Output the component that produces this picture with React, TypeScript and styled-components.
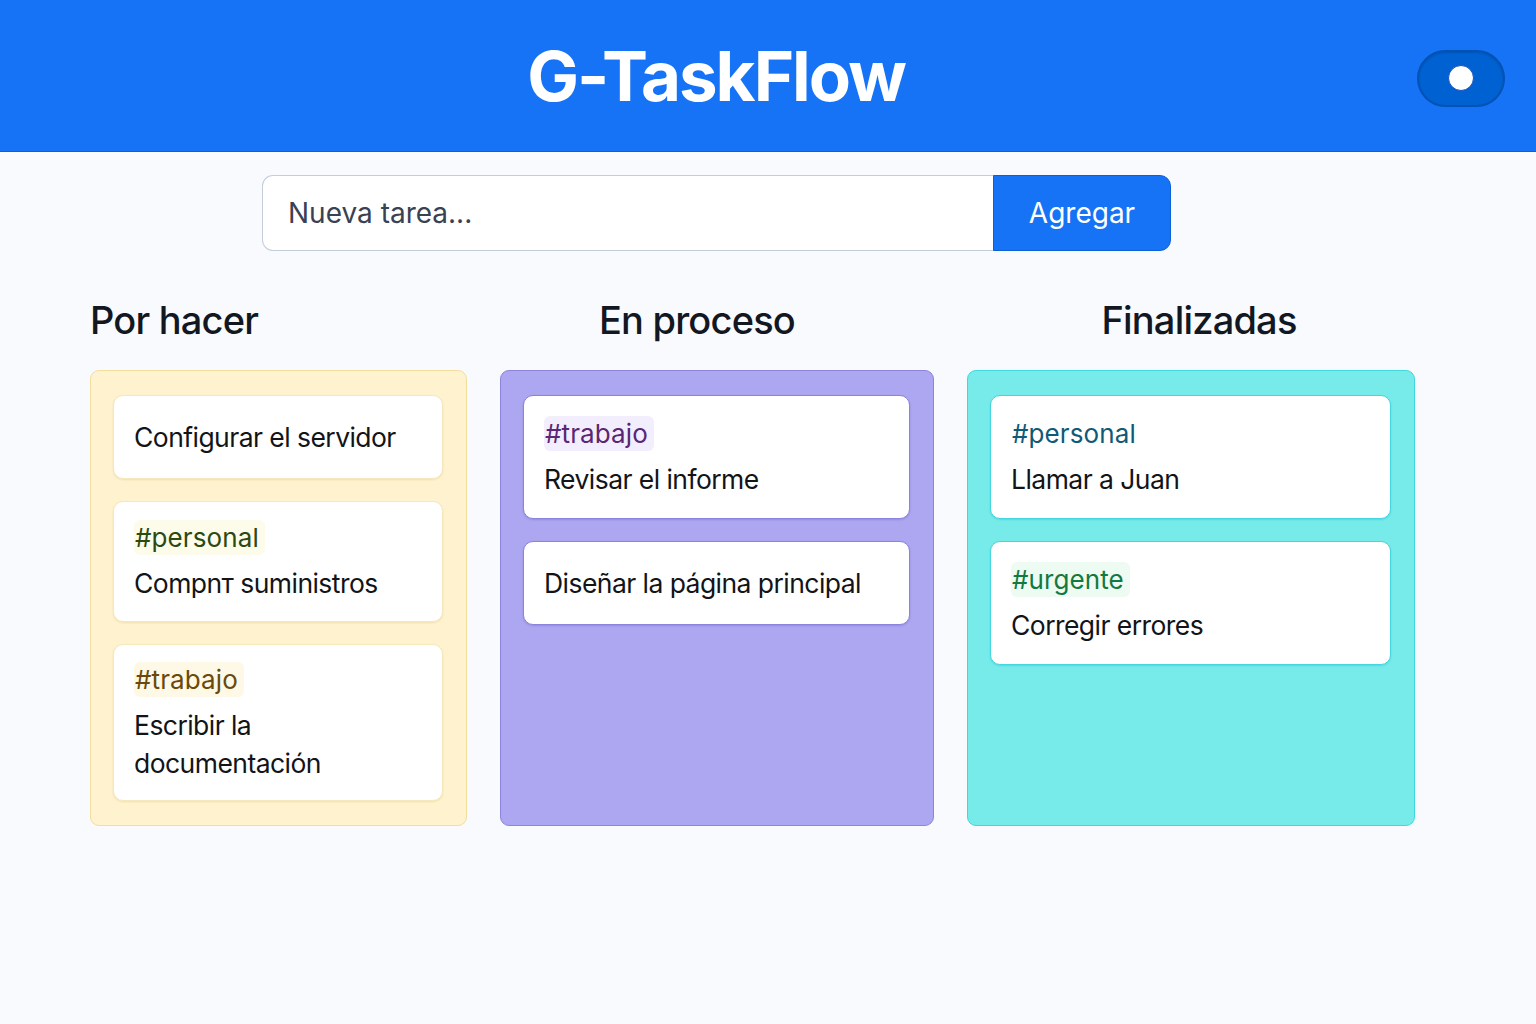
import React from "react";
import styled, { createGlobalStyle } from "styled-components";

const Global = createGlobalStyle`
  * { box-sizing: border-box; }
  html, body { margin: 0; padding: 0; }
  body {
    background: #f8fafd;
    font-family: Inter, "Noto Sans", "Liberation Sans", sans-serif;
    color: #111418;
  }
`;

const Page = styled.div`
  min-height: 1024px;
  background: #f8fafd;
`;

const Header = styled.header`
  height: 152px;
  background: #1673f5;
  border-bottom: 1px solid #0b5fd8;
  display: flex;
  align-items: center;
  padding: 0 31px 0 15px;
`;

const Title = styled.h1`
  flex: 1;
  margin: 0;
  text-align: center;
  color: #ffffff;
  font-size: 69px;
  font-weight: 700;
  letter-spacing: -2px;
  line-height: 1;
  padding-top: 2px;
`;

const Toggle = styled.div`
  width: 88px;
  height: 57px;
  margin-top: 5px;
  border-radius: 29px;
  background: #0062d2;
  border: 2px solid #0152b4;
  display: flex;
  align-items: center;
  justify-content: center;
  box-shadow: inset 0 1px 2px rgba(0, 0, 0, 0.15);
`;

const Knob = styled.span`
  width: 26px;
  height: 26px;
  border-radius: 50%;
  background: #ffffff;
  border: 1px solid #1a4fbf;
`;

const Form = styled.form`
  width: 909px;
  height: 76px;
  margin: 23px 0 0 262px;
  display: flex;
`;

const Input = styled.input`
  flex: 1;
  height: 100%;
  border: 1px solid #c5cddb;
  border-right: none;
  border-radius: 11px 0 0 11px;
  background: #ffffff;
  padding: 0 25px;
  font-family: Inter, "Noto Sans", sans-serif;
  font-size: 28px;
  color: #1f2430;
  outline: none;
  &::placeholder {
    color: #3a4152;
  }
`;

const AddButton = styled.button`
  width: 178px;
  height: 100%;
  border: 1px solid #0d5fd8;
  border-radius: 0 11px 11px 0;
  background: #1673f5;
  color: #ffffff;
  font-family: Inter, "Noto Sans", sans-serif;
  font-size: 28px;
  font-weight: 400;
  padding: 0;
`;

const Board = styled.main`
  display: grid;
  grid-template-columns: 377px 434px 448px;
  grid-template-rows: auto 456px;
  column-gap: 33px;
  row-gap: 27px;
  margin: 46px 0 0 90px;
`;

const Heading = styled.h2<{ $align: string; $pl: number; $pr: number }>`
  margin: 0;
  font-size: 38px;
  font-weight: 500;
  line-height: 46px;
  color: #121722;
  letter-spacing: -0.8px;
  text-align: ${(p) => p.$align};
  padding-left: ${(p) => p.$pl}px;
  padding-right: ${(p) => p.$pr}px;
`;

type Tone = { bg: string; border: string; card: string; shadow: string };

const Column = styled.section<{ $tone: Tone }>`
  background: ${(p) => p.$tone.bg};
  border: 1px solid ${(p) => p.$tone.border};
  border-radius: 9px;
  padding: 24px 23px 24px 22px;
  display: flex;
  flex-direction: column;
  gap: 22px;
`;

const Card = styled.article<{ $tone: Tone }>`
  background: #ffffff;
  border: 1px solid ${(p) => p.$tone.card};
  border-radius: 10px;
  box-shadow: 0 1px 2px ${(p) => p.$tone.shadow};
  min-height: 84px;
  padding: 20px 20px 20px;
  display: flex;
  flex-direction: column;
  justify-content: center;
  align-items: flex-start;
`;

const Tag = styled.span<{ $color: string; $bg: string }>`
  display: inline-block;
  font-size: 26px;
  line-height: 31px;
  padding: 2px 6px 2px 1px;
  margin-bottom: 9px;
  border-radius: 6px;
  color: ${(p) => p.$color};
  background: ${(p) => p.$bg};
  letter-spacing: 0.1px;
`;

const CardText = styled.p`
  margin: 0;
  font-size: 26.5px;
  line-height: 38px;
  letter-spacing: -0.55px;
  color: #121418;
  font-weight: 400;
`;

const tones: Record<string, Tone> = {
  todo: { bg: "#fff2cf", border: "#f2dd9f", card: "#f6e8bd", shadow: "rgba(200,170,80,0.25)" },
  doing: { bg: "#ada6f0", border: "#8d85dc", card: "#8b83de", shadow: "rgba(80,70,180,0.25)" },
  done: { bg: "#76ebea", border: "#3fd8e0", card: "#45d6df", shadow: "rgba(20,150,170,0.25)" },
};

type Task = { text: string; tag?: { label: string; color: string; bg: string } };

const columns: {
  title: string;
  align: string;
  pl: number;
  pr: number;
  tone: Tone;
  tasks: Task[];
}[] = [
  {
    title: "Por hacer",
    align: "left",
    pl: 0,
    pr: 0,
    tone: tones.todo,
    tasks: [
      { text: "Configurar el servidor" },
      { text: "Compnт suministros", tag: { label: "#personal", color: "#2c4a10", bg: "#fdfbea" } },
      { text: "Escribir la documentación", tag: { label: "#trabajo", color: "#6a4a0a", bg: "#fef8e6" } },
    ],
  },
  {
    title: "En proceso",
    align: "center",
    pl: 0,
    pr: 40,
    tone: tones.doing,
    tasks: [
      { text: "Revisar el informe", tag: { label: "#trabajo", color: "#5a2675", bg: "#f3eefd" } },
      { text: "Diseñar la página principal" },
    ],
  },
  {
    title: "Finalizadas",
    align: "center",
    pl: 16,
    pr: 0,
    tone: tones.done,
    tasks: [
      { text: "Llamar a Juan", tag: { label: "#personal", color: "#0e5a78", bg: "transparent" } },
      { text: "Corregir errores", tag: { label: "#urgente", color: "#127a40", bg: "#edfbf3" } },
    ],
  },
];

export default function App() {
  return (
    <Page>
      <Global />
      <Header>
        <Title>G-TaskFlow</Title>
        <Toggle>
          <Knob />
        </Toggle>
      </Header>
      <Form onSubmit={(e) => e.preventDefault()}>
        <Input placeholder="Nueva tarea..." />
        <AddButton type="submit">Agregar</AddButton>
      </Form>
      <Board>
        {columns.map((c) => (
          <Heading key={c.title + "h"} $align={c.align} $pl={c.pl} $pr={c.pr}>
            {c.title}
          </Heading>
        ))}
        {columns.map((c) => (
          <Column key={c.title} $tone={c.tone}>
            {c.tasks.map((t) => (
              <Card key={t.text} $tone={c.tone}>
                {t.tag && (
                  <Tag $color={t.tag.color} $bg={t.tag.bg}>
                    {t.tag.label}
                  </Tag>
                )}
                <CardText>{t.text}</CardText>
              </Card>
            ))}
          </Column>
        ))}
      </Board>
    </Page>
  );
}
